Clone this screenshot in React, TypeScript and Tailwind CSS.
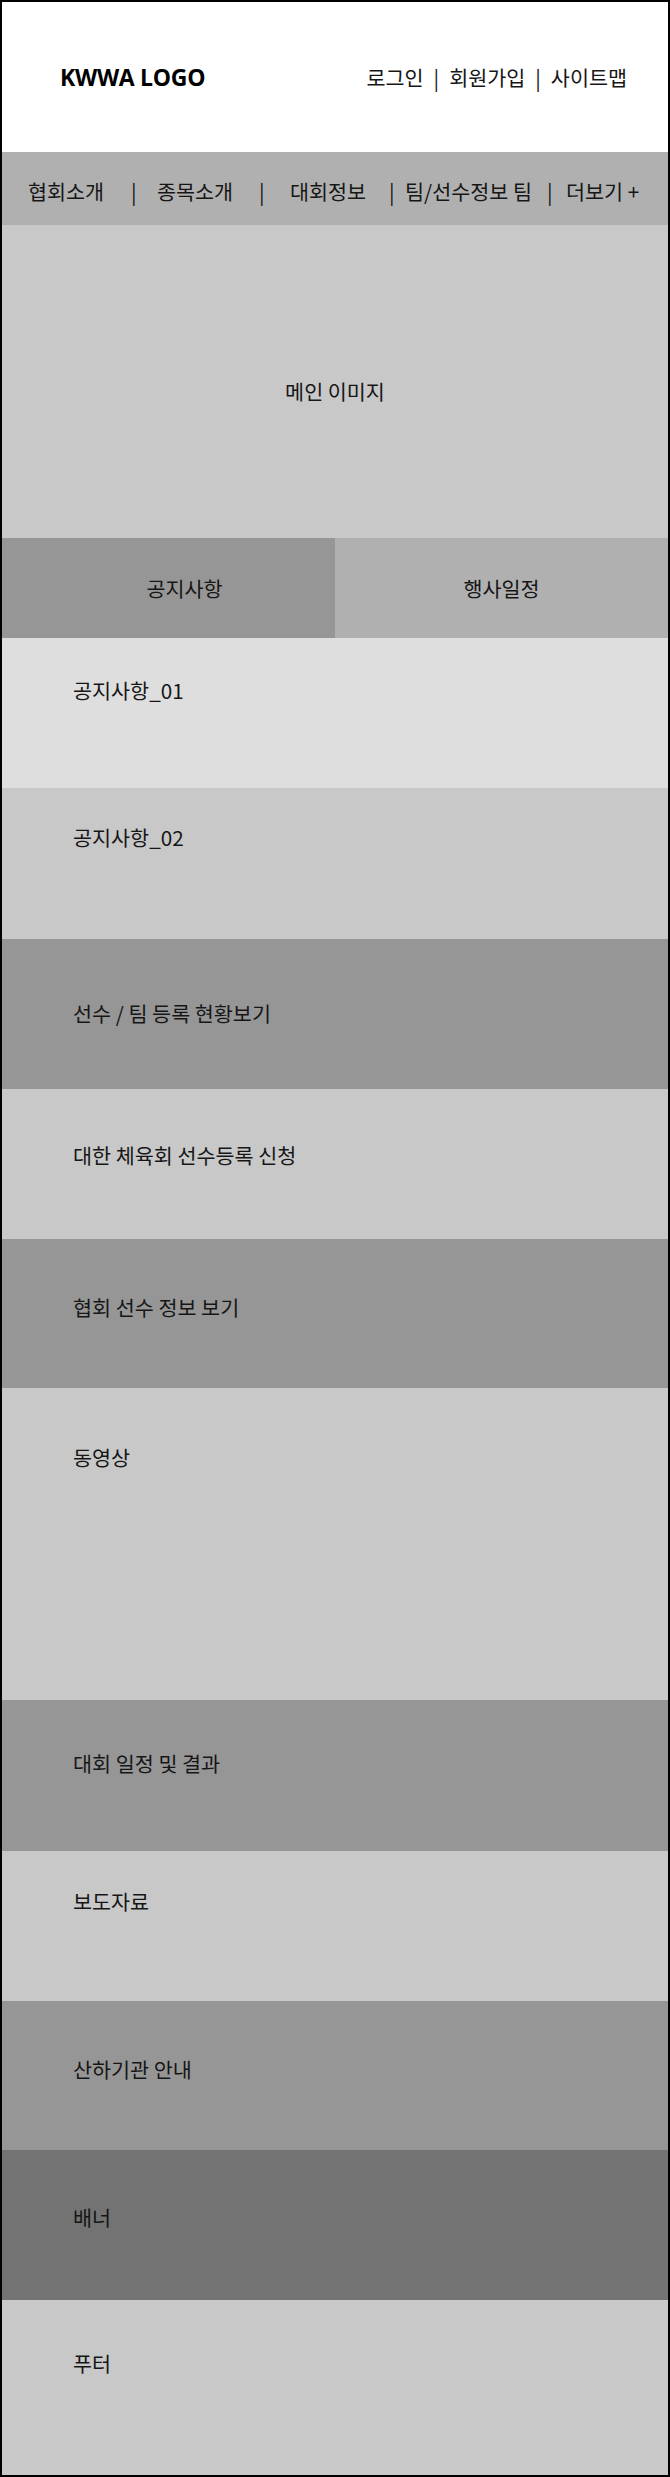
import React from 'react'

type Row = {
  label: string
  className: string
}

// section rows under the notice tabs
const rows: Row[] = [
  { label: '공지사항_01', className: 'h-[150px] bg-[#dedede] pt-[38px]' },
  { label: '공지사항_02', className: 'h-[151px] bg-[#c8c8c8] pt-[35px]' },
  { label: '선수 / 팀 등록 현황보기', className: 'h-[150px] bg-[#969696] pt-[60px]' },
  { label: '대한 체육회 선수등록 신청', className: 'h-[150px] bg-[#c8c8c8] pt-[52px]' },
  { label: '협회 선수 정보 보기', className: 'h-[149px] bg-[#969696] pt-[54px]' },
  { label: '동영상', className: 'h-[312px] bg-[#c8c8c8] pt-[55px]' },
  { label: '대회 일정 및 결과', className: 'h-[151px] bg-[#969696] pt-[49px]' },
  { label: '보도자료', className: 'h-[150px] bg-[#c8c8c8] pt-[36px]' },
  { label: '산하기관 안내', className: 'h-[149px] bg-[#969696] pt-[54px]' },
  { label: '배너', className: 'h-[150px] bg-[#737373] pt-[53px]' },
  { label: '푸터', className: 'h-[175px] bg-[#c8c8c8] pt-[49px]' },
]

const Sep: React.FC<{ className?: string }> = ({ className = '' }) => (
  <span className={className}>|</span>
)

const App: React.FC = () => {
  return (
    <div className="w-[670px] h-[2477px] border-2 border-black bg-white text-[#161616] font-['Noto_Sans_CJK_KR','Noto_Sans',sans-serif] text-[20.7px] leading-7 flex flex-col overflow-hidden">
      {/* header */}
      <header className="h-[150px] shrink-0 flex items-center justify-between pl-[58px] pr-[41px]">
        <div className="font-['Open_Sans',sans-serif] font-bold text-[23px] tracking-[-0.3px] text-black">
          KWWA LOGO
        </div>
        <div className="flex items-center">
          <span>로그인</span>
          <Sep className="mx-[10px]" />
          <span>회원가입</span>
          <Sep className="mx-[10px]" />
          <span>사이트맵</span>
        </div>
      </header>

      {/* nav */}
      <nav className="h-[73px] shrink-0 bg-[#b0b0b0] flex items-center pt-1 pl-[26px] whitespace-nowrap">
        <span className="w-[103px] shrink-0">협회소개</span>
        <Sep className="w-[26px] shrink-0" />
        <span className="w-[102px] shrink-0">종목소개</span>
        <Sep className="w-[31px] shrink-0" />
        <span className="w-[99px] shrink-0">대회정보</span>
        <Sep className="w-[16px] shrink-0" />
        <span className="w-[142px] shrink-0">팀/선수정보 팀</span>
        <Sep className="w-[19px] shrink-0" />
        <span>더보기 +</span>
      </nav>

      {/* main visual */}
      <section className="h-[313px] shrink-0 bg-[#c8c8c8] flex items-center justify-center pt-[18px]">
        <span>메인 이미지</span>
      </section>

      {/* tabs */}
      <div className="h-[100px] shrink-0 grid grid-cols-2">
        <button className="bg-[#969696] flex items-center justify-center pl-8">공지사항</button>
        <button className="bg-[#b0b0b0] flex items-center justify-center">행사일정</button>
      </div>

      {rows.map((row) => (
        <section key={row.label} className={`shrink-0 pl-[71px] ${row.className}`}>
          <span>{row.label}</span>
        </section>
      ))}
    </div>
  )
}

export default App
